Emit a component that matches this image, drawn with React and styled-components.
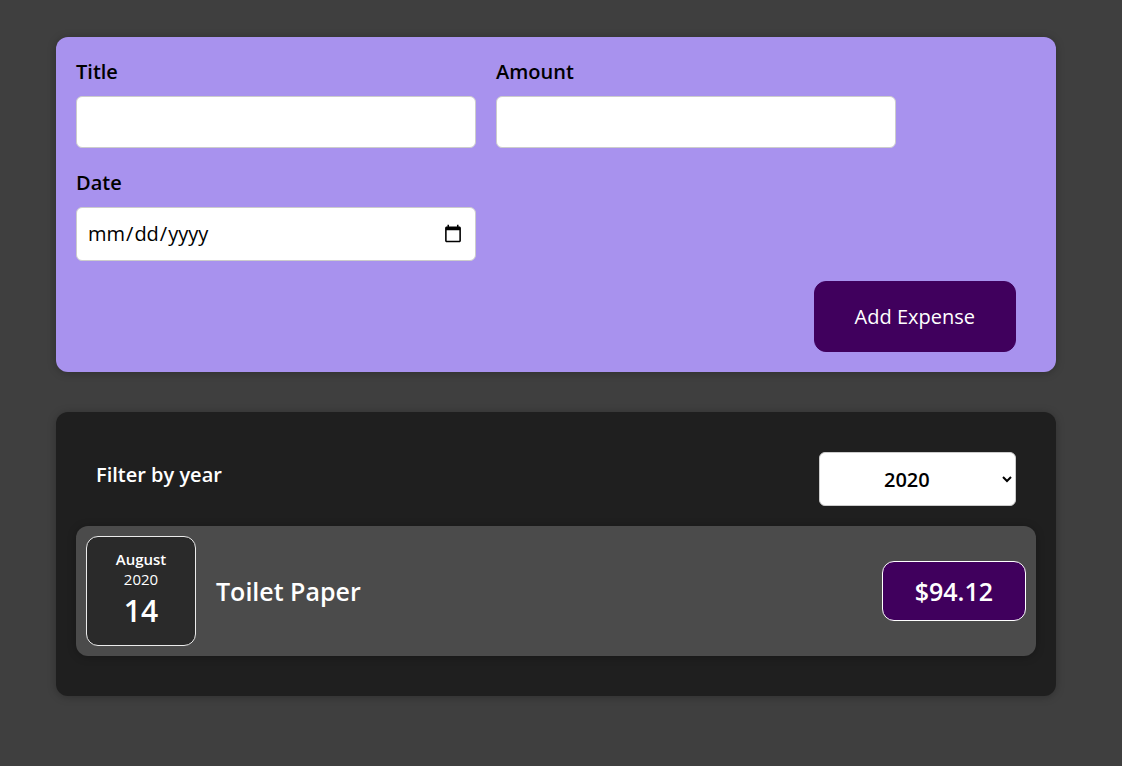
import React from 'react';
import styled, {createGlobalStyle} from "styled-components";

const GlobalStyle = createGlobalStyle`
html{
font-size: 20px;
}
body{
margin: 0;
background-color: #3f3f3f;
font-family: "Open Sans", Lato, sans-serif;
}
* {
box-sizing: border-box;
}
`;

const Page = styled.div`
padding: 37px 10px 40px 0;
`;
const Card = styled.div`
border-radius: 12px;
box-shadow: 0 1px 8px rgba(0, 0, 0, 0.25);
`;
const NewExpense = styled(Card)`
background-color: #a892ee;
padding: 1rem;
margin: 0 auto 40px;
width: 50rem;
text-align: center;
`;
const Controls = styled.div`
display: flex;
flex-wrap: wrap;
gap: 1rem;
margin-bottom: 1rem;
text-align: left;
`;
const Control = styled.div`
label{
font-weight: 600;
line-height: 29px;
margin-bottom: 0.5rem;
display: block;
color: #000;
}
input{
font: inherit;
line-height: 30px;
height: ${props => props.date ? "54px" : "52px"};
padding: 0.5rem;
border-radius: 6px;
border: 1px solid #ccc;
width: 20rem;
background: #fff;
}
`;
const Actions = styled.div`
text-align: right;
`;
const Button = styled.button`
font: inherit;
line-height: 29px;
cursor: pointer;
padding: 1rem 2rem;
border: 1px solid #40005d;
background-color: #40005d;
color: white;
border-radius: 12px;
margin-right: 1rem;
`;
const Expenses = styled(Card)`
padding: 1rem;
background-color: rgb(31, 31, 31);
margin: 0 auto;
width: 50rem;
`;
const Filter = styled.div`
color: white;
padding: 0 1rem;
`;
const FilterControl = styled.div`
display: flex;
width: 100%;
align-items: center;
justify-content: space-between;
margin: 1rem 0;
label{
font-weight: 600;
margin-bottom: 0.5rem;
}
select{
font: inherit;
font-weight: 600;
height: 54px;
width: 197px;
padding: 0.5rem 1rem 0.5rem 3rem;
border-radius: 6px;
border: 1px solid #ccc;
background: #fff;
color: #000;
}
`;
const Item = styled(Card)`
display: flex;
justify-content: space-between;
align-items: center;
padding: 0.5rem;
margin: 1rem 0;
background-color: #4b4b4b;
`;
const Description = styled.div`
display: flex;
align-items: center;
flex: 1;
h2{
font-size: 1.25rem;
font-weight: 600;
flex: 1;
margin: 0 1rem;
color: white;
text-align: left;
}
`;
const DateBox = styled.div`
display: flex;
flex-direction: column;
width: 5.5rem;
height: 5.5rem;
border: 1px solid #ececec;
background-color: #2a2a2a;
color: white;
border-radius: 12px;
align-items: center;
justify-content: center;
`;
const DatePart = styled.div`
font-size: ${props => props.big ? "1.5rem" : "0.75rem"};
font-weight: ${props => props.light ? "normal" : "600"};
line-height: ${props => props.big ? "44px" : "20px"};
`;
const Price = styled.div`
font-size: 1.25rem;
font-weight: 600;
line-height: 38px;
color: white;
background-color: #40005d;
border: 1px solid white;
padding: 0.5rem 1.6rem;
border-radius: 12px;
`;

const App = () => {
    return (
        <Page>
            <GlobalStyle/>
            <NewExpense>
                <form onSubmit={e => e.preventDefault()}>
                    <Controls>
                        <Control>
                            <label>Title</label>
                            <input type="text"/>
                        </Control>
                        <Control>
                            <label>Amount</label>
                            <input type="number" min="0.01" step="0.01"/>
                        </Control>
                        <Control date>
                            <label>Date</label>
                            <input type="date" min="2019-01-01" max="2022-12-31"/>
                        </Control>
                    </Controls>
                    <Actions>
                        <Button type="submit">Add Expense</Button>
                    </Actions>
                </form>
            </NewExpense>
            <Expenses>
                <Filter>
                    <FilterControl>
                        <label>Filter by year</label>
                        <select defaultValue="2020">
                            <option value="2022">2022</option>
                            <option value="2021">2021</option>
                            <option value="2020">2020</option>
                            <option value="2019">2019</option>
                        </select>
                    </FilterControl>
                </Filter>
                <Item>
                    <Description>
                        <DateBox>
                            <DatePart>August</DatePart>
                            <DatePart light>2020</DatePart>
                            <DatePart big>14</DatePart>
                        </DateBox>
                        <h2>Toilet Paper</h2>
                    </Description>
                    <Price>$94.12</Price>
                </Item>
            </Expenses>
        </Page>
    )
};

export default App
